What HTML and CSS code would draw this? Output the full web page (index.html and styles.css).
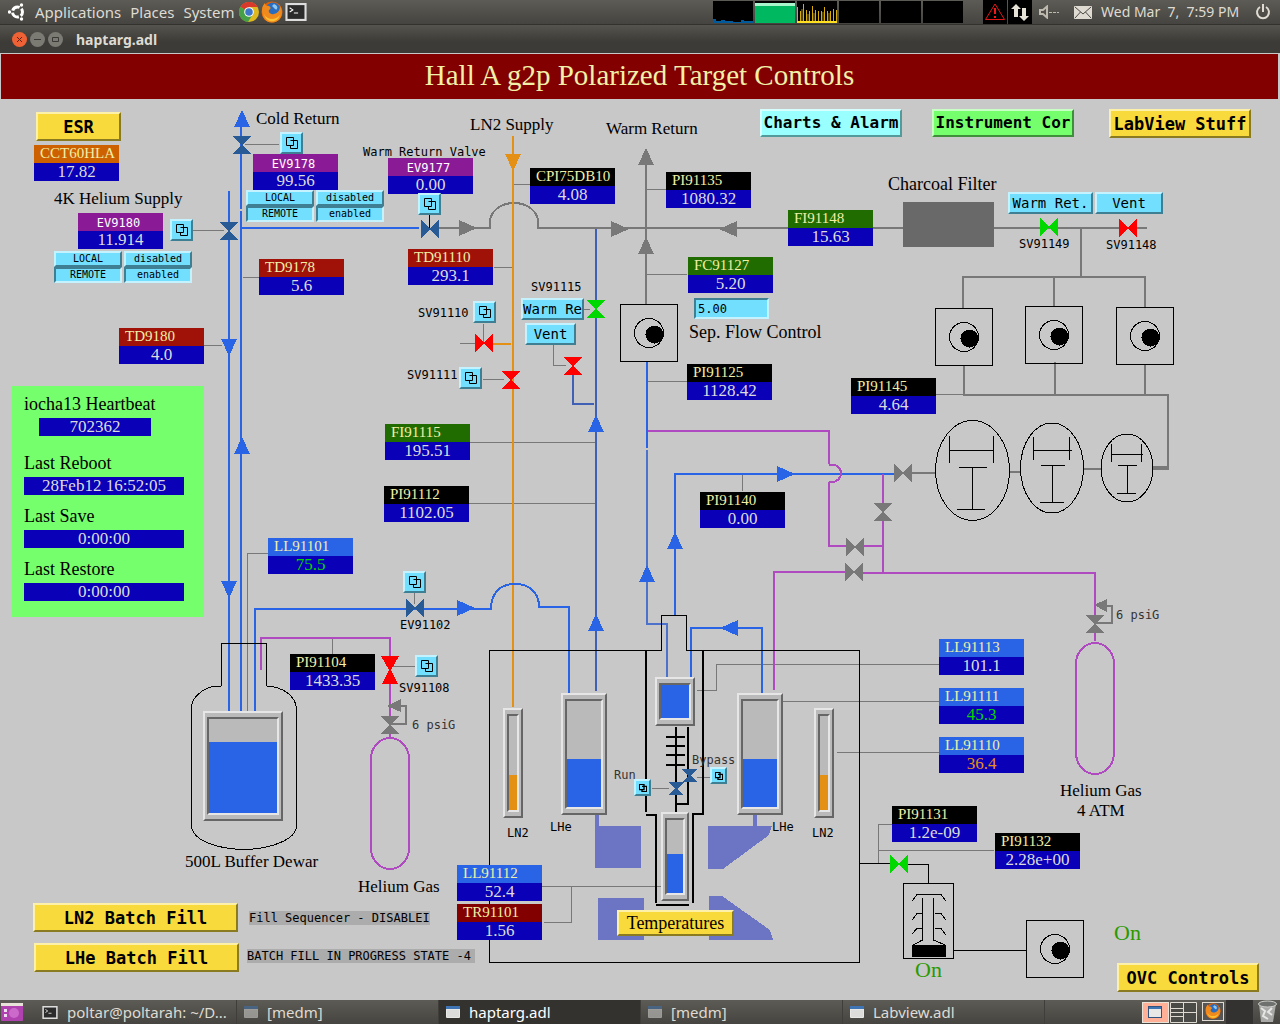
FILE: index.html
```html
<!doctype html>
<html lang="en">
<head>
    <meta charset="UTF-8">
    <meta name="viewport" content="width=device-width, initial-scale=1.0">
    <title>haptarg.adl</title>
    <link rel="stylesheet" href="styles.css">
</head>
<body>

<svg class="defs" aria-hidden="true">
    <symbol id="related" viewBox="0 0 12 12">
        <path d="M4.500 3.500H11.500V11.500H4.500V8.500M.5.500H7.500V8.500H.5Z" fill="none" stroke="#000"/>
    </symbol>
    <symbol id="win" viewBox="0 0 14 12">
        <rect width="14" height="12" rx="1" fill="#e8e8e6"/>
        <rect width="14" height="3" fill="#3f74b5"/>
        <rect x="1" y="4" width="12" height="7" fill="#dcdcda"/>
    </symbol>
    <symbol id="term" viewBox="0 0 20 17">
        <rect x="1" y="1" width="18" height="15" fill="#2b2b2b" stroke="#ddd" stroke-width="2"/>
        <path d="M4 4.500L7 6.500L4 8.500M8 9.500H12" fill="none" stroke="#fff"/>
    </symbol>
    <symbol id="firefox" viewBox="0 0 22 22">
        <circle cx="11" cy="11" r="10.500" fill="#e66000"/>
        <circle cx="12" cy="9" r="7.500" fill="#2a6cc0"/>
        <path d="M13 3C16 4 17 6 16 8C14 10 13 6 11 5Z" fill="#8ec7ee"/>
        <path d="M1 9C1 5 3 3 4 2C4 4 5 5 8 5C10 6 10 8 8 9C7 11 9 14 13 13C17 12 19 9 19 5C23 11 21 21 11 21.500C5 21.500 1 17 1 9Z" fill="#f08a1d"/>
        <path d="M3 13C6 19 14 20 19 14C17 20 12 21 9 20C6 19 4 17 3 13Z" fill="#fbc236"/>
    </symbol>
</svg>

<header class="panel">
    <nav class="menu">
        <svg class="logo" viewBox="0 0 18 18" width="18" height="18">
            <circle cx="9.500" cy="9" r="5" fill="none" stroke="#fff" stroke-width="3" stroke-dasharray="8.470 2" stroke-dashoffset="-6.200"/>
            <circle cx="1.500" cy="9" r="1.700" fill="#fff"/>
            <circle cx="13.500" cy="2" r="1.700" fill="#fff"/>
            <circle cx="13.500" cy="16" r="1.700" fill="#fff"/>
        </svg>
        <button>Applications</button>
        <button>Places</button>
        <button>System</button>
    </nav>
    <div class="launchers">
        <svg viewBox="0 0 20 20" width="20" height="20">
            <circle cx="10" cy="10" r="10" fill="#e0b91f"/>
            <path d="M10 10L1.300 5A10 10 0 0 1 18.700 5H10Z" fill="#d9392b"/>
            <path d="M10 10L1.300 5A10 10 0 0 0 9 20L14 12Z" fill="#45a047"/>
            <circle cx="10" cy="10" r="4.800" fill="#fff"/>
            <circle cx="10" cy="10" r="3.800" fill="#3d78c8"/>
        </svg>
        <svg width="22" height="22"><use href="#firefox"/></svg>
        <svg width="22" height="18"><use href="#term"/></svg>
    </div>
    <div class="graphs">
        <svg viewBox="0 0 40 22"><path d="M0 21V18H3V20H8V19H12V20H20V21H28V19H31V20H40V22H0Z" fill="#005a9c"/></svg>
        <svg viewBox="0 0 40 22"><rect y="3" width="40" height="19" fill="#00b860"/><rect y="2" width="40" height="3" fill="#a8f5cc"/></svg>
        <svg viewBox="0 0 40 22"><path d="M.5 22V6M3.500 22V10M6.500 22V3M9.500 22V9M12.500 22V10M15.500 22V5M18.500 22V9M21.500 22V10M24.500 22V10M27.500 22V6M30.500 22V10M33.500 22V10M36.500 22V8M39.500 22V9" stroke="#d8ac00"/><path d="M5 22V8M11 22V13M17 22V12M26 22V11M32 22V12" stroke="#9a7c00"/><rect y="20" width="40" height="2" fill="#ffe020"/></svg>
        <svg viewBox="0 0 40 22"></svg>
        <svg viewBox="0 0 40 22"></svg>
        <svg viewBox="0 0 40 22"></svg>
    </div>
    <div class="tray">
        <svg class="dark" viewBox="0 0 24 24" width="24" height="24">
            <path d="M12 4L21.500 19.500H2.500Z" fill="none" stroke="#e01818"/>
            <path d="M12 8V14M12 16V18" stroke="#f01818" stroke-width="2"/>
        </svg>
        <svg class="dark" viewBox="0 0 24 24" width="24" height="24">
            <path d="M8 4L13 9H10V17H6V9H3ZM16 21L11 16H14V8H18V16H21Z" fill="#e6e2d8"/>
        </svg>
        <svg class="speaker" viewBox="0 0 22 14" width="22" height="14">
            <path d="M1 5H4L8 1.500V12.500L4 9H1Z" fill="none" stroke="#bdb9ae" stroke-width="2"/>
            <path d="M10 7.500H20" stroke="#bdb9ae" stroke-dasharray="3 1"/>
        </svg>
        <svg viewBox="0 0 18 13" width="18" height="13">
            <rect width="18" height="13" rx="1" fill="#dfdbd2"/>
            <path d="M1 1L9 8L17 1M1 12L6.500 6M17 12L11.500 6" fill="none" stroke="#4a4944"/>
        </svg>
        <time>Wed Mar&nbsp; 7,&nbsp; 7:59 PM</time>
        <svg class="power" viewBox="0 0 16 16" width="16" height="16">
            <path d="M5 3A6 6 0 1 0 11 3M8 0V8" fill="none" stroke="#dfdbd2" stroke-width="2"/>
        </svg>
    </div>
</header>

<div class="titlebar">
    <button class="wm close" aria-label="Close"><svg viewBox="0 0 15 15"><path d="M5 5L10 10M10 5L5 10" stroke="#5c2312"/></svg></button>
    <button class="wm" aria-label="Minimize"><svg viewBox="0 0 15 15"><path d="M4 7.500H11" stroke="#3a3935"/></svg></button>
    <button class="wm" aria-label="Maximize"><svg viewBox="0 0 15 15"><path d="M4.500 5.500H10.500V9.500H4.500Z" fill="none" stroke="#3a3935"/></svg></button>
    <span class="title">haptarg.adl</span>
</div>

<main>
    <h1 class="banner">Hall A g2p Polarized Target Controls</h1>

    <div class="diagram">
        <svg class="piping" viewBox="0 99 1280 901" width="1280" height="901">
            <defs>
                <path id="vv" d="M-9-9H9L1 0L9 9H-9L-1 0Z"/>
                <path id="vh" d="M-9-9V9L0 1L9 9V-9L0-1Z"/>
                <path id="up" d="M0-9L8 8H-8Z"/>
                <path id="down" d="M0 9L8-8H-8Z"/>
                <path id="right" d="M9 0L-9-8V8Z"/>
                <path id="left" d="M-9 0L9-8V8Z"/>
                <g id="pump">
                    <rect x="-28.500" y="-28.500" width="57" height="57" fill="none" stroke="#000"/>
                    <circle r="14.500" fill="none" stroke="#000"/>
                    <circle cx="5.500" cy="1.500" r="9" fill="#000"/>
                </g>
            </defs>

            <!-- magnet coils -->
            <g class="magnet">
                <path d="M595 815H599V826H641V868H595Z"/>
                <path d="M598 898H644V940H598Z"/>
                <path d="M753 815H757V826H772L769 835L723 869H708V826H753Z"/>
                <path d="M709 896H722L770 930L773 940H709Z"/>
            </g>

            <!-- sense lines -->
            <g class="sense">
                <path d="M245 144.500H279M193 230.500H224M243 277.500H259M204 345.500H222M268 553.500H247.500V711"/>
                <path d="M514 184.500H530M494 267.500H512M647 189.500H666M647 274.500H687M648 381.500H688"/>
                <path d="M583 309.500H590M553.500 345V365.500H566M483.500 324V343M460 343.500H476M483 379.500H504"/>
                <path d="M470 442.500H597M468 503.500H597M414.500 593V604M332.500 639V655M393 666.500H415"/>
                <path d="M742.500 474V491M936 394.500H964M697 690.500H716.500V664.500H939M783 701.500H939M837 752.500H939"/>
                <path d="M697 777.500H710M652 788.500H669M542 886.500H661M571.500 886V922.500H544"/>
                <path d="M892 824.500H878.500V863M878 850.500H994"/>
            </g>

            <!-- warm return -->
            <g class="pipe gray">
                <path d="M438 228H490V222A24 19 0 0 1 538 222V228H788M873 228H903M994 228H1147"/>
                <path d="M646 160V304M1081 228V276M963 308V277H1145V307M1054 277V306"/>
                <path d="M964 365V395H1168V466M1055 362V395M1145 364V395"/>
                <path d="M911 473H935M1010 472H1020M1083 469H1101"/>
                <path d="M401 706H406V724H390M1107 606H1112V623H1095"/>
                <path d="M1153 468H1169" class="fat"/>
            </g>
            <rect x="903" y="202" width="91" height="45" class="filter"/>

            <!-- LN2 -->
            <path class="pipe orange" d="M513 136V707M492 344H511"/>

            <!-- cold lines -->
            <g class="pipe blue">
                <path d="M229 191V711M241 115V209M241 211V711M241 228H419"/>
                <path d="M255 711V609H491C491 592 501 584 515 584C529 584 539 592 539 607H569V694"/>
                <path d="M647 361V448M675 615V474H894M691 678V628H762V694"/>
            </g>
            <path class="pipe navy" d="M596 229V691M573 374V404H594"/>
            <path class="pipe steel" d="M647 450V624H667V678"/>

            <!-- helium gas -->
            <g class="pipe purple">
                <path d="M261 670V638H390V738M648 431H829V464M829 482V546H847"/>
                <path d="M829 465C845 462 845 484 829 482M883 474V573M864 546H883"/>
                <path d="M774 690V572H846M862 573H1095V641"/>
                <rect x="371" y="738" width="38" height="131" rx="19" ry="21"/>
                <rect x="1076" y="643" width="38" height="131" rx="19" ry="21"/>
            </g>

            <!-- vessels -->
            <g class="wall">
                <path d="M221.500 686V643.500H266.500V686C284 687 295 696 296.500 708V826C296 840 270 849 244 849.500C220 849 193 842 191.500 826V708C191 698 203 688 215 686H221" class="dewar"/>
                <path d="M489.500 962.500V650.500H661.500V615.500H686.500V650.500H859.500V962.500Z"/>
                <path d="M859 863.500H892M907 864.500H928.500V883M953 950.500H1026"/>
                <ellipse cx="972.500" cy="470.500" rx="37" ry="50"/>
                <path d="M949.500 436V463M993.500 436V463M949 450.500H994M959 467.500H987M972.500 467V509M957 509.500H985"/>
                <ellipse cx="1052" cy="468" rx="31.500" ry="45"/>
                <path d="M1033.500 437V460M1069.500 437V460M1033 450.500H1072M1041 465.500H1065M1052.500 465V502M1040 502.500H1064"/>
                <ellipse cx="1127" cy="468" rx="26" ry="34"/>
                <path d="M1111.500 444V462M1141.500 444V462M1111 454.500H1143M1118 465.500H1137M1127.500 465V493M1117 493.500H1136"/>
                <rect x="903.500" y="883.500" width="50" height="75"/>
                <path d="M912 901L917 894.500H941L946 901M912 920L917 913.500H922M912 934L917 928.500H922M935 913.500H941L946 920M935 928.500H941L946 935"/>
                <path d="M922.500 898V940L913 945M933.500 898V940L945 945"/>
                <rect x="912.500" y="945.500" width="33" height="11" fill="#000"/>
            </g>
            <g class="pipe black">
                <path d="M646 650V812M646 815H656V903M656 905H689M693 903V814H703V650"/>
                <path d="M676 727V812M688 727V804H676M666 737H685M666 746H685M666 755H685M666 765H685"/>
            </g>

            <!-- pumps -->
            <use href="#pump" x="649" y="333"/>
            <use href="#pump" x="964" y="337"/>
            <use href="#pump" x="1054" y="335"/>
            <use href="#pump" x="1145" y="336"/>
            <use href="#pump" x="1055" y="949"/>

            <!-- flow arrows -->
            <g class="f-blue">
                <use href="#up" x="242" y="119"/>
                <use href="#up" x="242" y="446"/>
                <use href="#down" x="229" y="347"/>
                <use href="#down" x="229" y="589"/>
                <use href="#right" x="466" y="608"/>
                <use href="#up" x="596" y="424"/>
                <use href="#up" x="596" y="623"/>
                <use href="#up" x="647" y="574"/>
                <use href="#up" x="675" y="541"/>
                <use href="#right" x="786" y="474"/>
                <use href="#left" x="729" y="628"/>
            </g>
            <g class="f-gray">
                <use href="#right" x="468" y="228"/>
                <use href="#right" x="620" y="229"/>
                <use href="#left" x="728" y="229"/>
                <use href="#up" x="646" y="157"/>
                <use href="#up" x="646" y="246"/>
                <path d="M387 706L401 699V712ZM1094 605L1107 599V612Z"/>
                <use href="#vh" x="903" y="473"/>
                <use href="#vv" x="883" y="512"/>
                <use href="#vh" x="855" y="547"/>
                <use href="#vh" x="854" y="572"/>
                <use href="#vv" x="390" y="725"/>
                <use href="#vv" x="1095" y="624"/>
            </g>
            <use href="#down" x="513" y="162" class="f-orange"/>

            <!-- valves -->
            <path class="stem" d="M429.500 215V228"/>
            <g class="f-valve">
                <use href="#vv" x="242" y="145"/>
                <use href="#vv" x="229" y="231"/>
                <use href="#vh" x="430" y="229"/>
                <use href="#vh" x="415" y="608"/>
                <path d="M682 769H697L691 776L697 782H682L688 776ZM668 782H684L677 789L684 795H668L675 789Z"/>
            </g>
            <g class="f-red">
                <use href="#vh" x="1128" y="228"/>
                <use href="#vh" x="484" y="343"/>
                <use href="#vv" x="511" y="380"/>
                <use href="#vv" x="573" y="366"/>
                <path d="M381 656H399L391 670L398 684H382L389 670Z"/>
            </g>
            <g class="f-green">
                <use href="#vh" x="1049" y="227"/>
                <use href="#vv" x="596" y="309"/>
                <use href="#vh" x="899" y="864"/>
            </g>
        </svg>

        <!-- level gauges -->
        <div class="tank at-dewar"><div class="well"><div class="level" style="height: 76%"></div></div></div>
        <div class="tank slim at-ln2-l"><div class="well"><div class="level ln2" style="height: 37%"></div></div></div>
        <div class="tank at-lhe-l"><div class="well"><div class="level" style="height: 45%"></div></div></div>
        <div class="tank at-pot"><div class="well"><div class="level" style="height: 100%"></div></div></div>
        <div class="tank at-nose"><div class="well"><div class="level" style="height: 53%"></div></div></div>
        <div class="tank at-lhe-r"><div class="well"><div class="level" style="height: 45%"></div></div></div>
        <div class="tank slim at-ln2-r"><div class="well"><div class="level ln2" style="height: 37%"></div></div></div>

        <!-- readbacks -->
        <div class="tag amber at-cct60hla"><span>CCT60HLA</span><output>17.82</output></div>
        <div class="tag valve at-ev9178"><span>EV9178</span><output>99.56</output></div>
        <div class="tag valve at-ev9180"><span>EV9180</span><output>11.914</output></div>
        <div class="tag valve at-ev9177"><span>EV9177</span><output>0.00</output></div>
        <div class="tag temp at-td9178"><span>TD9178</span><output>5.6</output></div>
        <div class="tag temp at-td9180"><span>TD9180</span><output>4.0</output></div>
        <div class="tag temp at-td91110"><span>TD91110</span><output>293.1</output></div>
        <div class="tag at-cpi75db10"><span>CPI75DB10</span><output>4.08</output></div>
        <div class="tag at-pi91135"><span>PI91135</span><output>1080.32</output></div>
        <div class="tag flow at-fi91148"><span>FI91148</span><output>15.63</output></div>
        <div class="tag flow at-fc91127"><span>FC91127</span><output>5.20</output></div>
        <div class="tag at-pi91125"><span>PI91125</span><output>1128.42</output></div>
        <div class="tag at-pi91145"><span>PI91145</span><output>4.64</output></div>
        <div class="tag flow at-fi91115"><span>FI91115</span><output>195.51</output></div>
        <div class="tag at-pi91112"><span>PI91112</span><output>1102.05</output></div>
        <div class="tag at-pi91140"><span>PI91140</span><output>0.00</output></div>
        <div class="tag lev at-ll91101"><span>LL91101</span><output class="ok">75.5</output></div>
        <div class="tag at-pi91104"><span>PI91104</span><output>1433.35</output></div>
        <div class="tag lev at-ll91113"><span>LL91113</span><output>101.1</output></div>
        <div class="tag lev at-ll91111"><span>LL91111</span><output class="ok">45.3</output></div>
        <div class="tag lev at-ll91110"><span>LL91110</span><output class="warn">36.4</output></div>
        <div class="tag at-pi91131"><span>PI91131</span><output>1.2e-09</output></div>
        <div class="tag at-pi91132"><span>PI91132</span><output>2.28e+00</output></div>
        <div class="tag lev at-ll91112"><span>LL91112</span><output>52.4</output></div>
        <div class="tag res at-tr91101"><span>TR91101</span><output>1.56</output></div>

        <!-- IOC status -->
        <section class="ioc">
            <h2>iocha13 Heartbeat</h2>
            <output class="beat">702362</output>
            <h2>Last Reboot</h2>
            <output>28Feb12 16:52:05</output>
            <h2>Last Save</h2>
            <output>0:00:00</output>
            <h2>Last Restore</h2>
            <output>0:00:00</output>
        </section>

        <!-- line and equipment names -->
        <span class="label at-cold-return">Cold Return</span>
        <span class="label at-supply">4K Helium Supply</span>
        <span class="label at-ln2-supply">LN2 Supply</span>
        <span class="label at-warm-return">Warm Return</span>
        <span class="label wide at-charcoal">Charcoal Filter</span>
        <label class="label wide at-sep-label" for="sepFlow">Sep. Flow Control</label>
        <span class="label at-dewar-name">500L Buffer Dewar</span>
        <span class="label at-gas-l">Helium Gas</span>
        <span class="label at-gas-r">Helium Gas<br>4 ATM</span>
        <span class="small at-wrv">Warm Return Valve</span>
        <span class="small at-sv91115">SV91115</span>
        <span class="small at-sv91110">SV91110</span>
        <span class="small at-sv91111">SV91111</span>
        <span class="small at-sv91149">SV91149</span>
        <span class="small at-sv91148">SV91148</span>
        <span class="small at-ev91102">EV91102</span>
        <span class="small at-sv91108">SV91108</span>
        <span class="small dim at-psi-l">6 psiG</span>
        <span class="small dim at-psi-r">6 psiG</span>
        <span class="small dim at-run">Run</span>
        <span class="small dim at-bypass">Bypass</span>
        <span class="small at-ln2-l-name">LN2</span>
        <span class="small at-lhe-l-name">LHe</span>
        <span class="small at-lhe-r-name">LHe</span>
        <span class="small at-ln2-r-name">LN2</span>
        <span class="state at-turbo-on">On</span>
        <span class="state at-pump-on">On</span>
        <span class="small message at-seq">Fill Sequencer - DISABLEI</span>
        <span class="small message at-batch">BATCH FILL IN PROGRESS STATE -4</span>

        <!-- controls -->
        <button class="btn yellow at-esr">ESR</button>
        <button class="btn aqua snug at-charts">Charts &amp; Alarm</button>
        <button class="btn green snug at-instr">Instrument Cor</button>
        <button class="btn yellow at-labview">LabView Stuff</button>
        <button class="btn yellow at-ln2-fill">LN2 Batch Fill</button>
        <button class="btn yellow at-lhe-fill">LHe Batch Fill</button>
        <button class="btn yellow at-ovc">OVC Controls</button>
        <button class="btn yellow serif at-temps">Temperatures</button>
        <button class="btn cyan at-warm-115">Warm Re</button>
        <button class="btn cyan at-vent-115">Vent</button>
        <button class="btn cyan at-warm-149">Warm Ret.</button>
        <button class="btn cyan at-vent-148">Vent</button>
        <input class="setpoint at-sep" id="sepFlow" type="text" value="5.00">

        <div class="choice at-choice-9178">
            <button>LOCAL</button><button>disabled</button>
            <button class="on">REMOTE</button><button class="on">enabled</button>
        </div>
        <div class="choice at-choice-9180">
            <button>LOCAL</button><button>disabled</button>
            <button class="on">REMOTE</button><button class="on">enabled</button>
        </div>

        <button class="rel at-rel-9178" aria-label="EV9178"><svg><use href="#related"/></svg></button>
        <button class="rel at-rel-9180" aria-label="EV9180"><svg><use href="#related"/></svg></button>
        <button class="rel at-rel-9177" aria-label="EV9177"><svg><use href="#related"/></svg></button>
        <button class="rel at-rel-91110" aria-label="SV91110"><svg><use href="#related"/></svg></button>
        <button class="rel at-rel-91111" aria-label="SV91111"><svg><use href="#related"/></svg></button>
        <button class="rel at-rel-91102" aria-label="EV91102"><svg><use href="#related"/></svg></button>
        <button class="rel at-rel-91108" aria-label="SV91108"><svg><use href="#related"/></svg></button>
        <button class="rel mini at-rel-run" aria-label="Run"><svg><use href="#related"/></svg></button>
        <button class="rel mini at-rel-bypass" aria-label="Bypass"><svg><use href="#related"/></svg></button>
    </div>
</main>

<footer class="taskbar">
    <button class="desk" aria-label="Show desktop">
        <svg viewBox="0 0 22 18" width="22" height="18">
            <rect width="22" height="18" rx="1" fill="#b042b0"/>
            <rect width="22" height="3" fill="#e8e2d8"/>
            <path d="M3 6H6V9H3ZM3 11H6V14H3Z" fill="#f0dff0"/>
            <circle cx="13" cy="10" r="5" fill="#cc6acb"/>
        </svg>
    </button>
    <nav class="tasks">
        <button><svg width="16" height="13"><use href="#term"/></svg>poltar@poltarah: ~/D...</button>
        <button class="min"><svg width="14" height="12"><use href="#win"/></svg>[medm]</button>
        <button class="current"><svg width="14" height="12"><use href="#win"/></svg>haptarg.adl</button>
        <button class="min"><svg width="14" height="12"><use href="#win"/></svg>[medm]</button>
        <button><svg width="14" height="12"><use href="#win"/></svg>Labview.adl</button>
    </nav>
    <svg class="pager" viewBox="0 0 138 24" width="138" height="24">
        <rect x=".5" y="2.500" width="26" height="20" fill="#ffb096" stroke="#e8e2d8"/>
        <rect x="6.500" y="6.500" width="13" height="11" fill="#e8e8e6" stroke="#30537f"/>
        <rect x="7" y="7" width="12" height="2" fill="#3f74b5"/>
        <path d="M28.500 2.500H54.500V22.500H28.500ZM41.500 2V23M28 12.500H55M28 8.500H41M28 16.500H41" fill="#4a4a47" stroke="#dfdbd2"/>
        <rect x="60.500" y="2.500" width="21" height="18" fill="#555" stroke="#dfdbd2"/>
        <svg x="63" y="3" width="16" height="16"><use href="#firefox"/></svg>
        <rect x="84" width="27" height="24" fill="#333230"/>
        <path d="M117 4L119 22H131L134 4Z" fill="#a9aaa8"/>
        <path d="M119 8L123 11L121 16L126 19M130 8L126 12L130 15" fill="none" stroke="#e6e6e4" stroke-width="2"/>
        <ellipse cx="125.500" cy="4" rx="9" ry="3" fill="#6f716f" stroke="#cfd0ce"/>
    </svg>
</footer>

</body>
</html>
```
FILE: styles.css
```css
* {
    box-sizing: border-box;
}

body {
    display: flex;
    flex-direction: column;
    min-height: 100vh;
    margin: 0;
    background: #c8c8c8;
    font-family: "Noto Sans", sans-serif;
}

button {
    margin: 0;
    padding: 0;
    border: none;
    background: none;
    color: inherit;
    font: inherit;
    white-space: nowrap;
    cursor: pointer;
}

svg {
    display: block;
    flex: none;
}

.defs {
    position: absolute;
    width: 0;
    height: 0;
}

/* desktop panel */

.panel {
    display: flex;
    align-items: center;
    height: 24px;
    background: linear-gradient(#5c5b55, #454440);
    color: #dfdbd2;
    font-size: 14px;
    line-height: 24px;
}

.menu {
    display: flex;
    align-items: center;
    gap: 9px;
    padding-left: 8px;
    font-size: 15px;
}

.launchers {
    display: flex;
    align-items: center;
    gap: 2px;
    margin-left: 5px;
}

.graphs {
    display: flex;
    gap: 2px;
    margin-left: auto;
    margin-right: 20px;
}

.graphs svg {
    width: 40px;
    height: 22px;
    background: #000;
}

.tray {
    display: flex;
    align-items: center;
    padding-right: 9px;
}

.dark {
    background: #000;
    margin-right: 1px;
}

.speaker {
    margin: 0 13px 0 6px;
}

.tray time {
    width: 138px;
    margin: 0 16px 0 9px;
    white-space: nowrap;
}

.titlebar {
    display: flex;
    align-items: center;
    gap: 3px;
    height: 29px;
    padding-left: 12px;
    background: linear-gradient(#55544e, #3c3b37 60%);
    border-top: 1px solid #33322f;
    color: #dfdbd2;
}

.wm {
    width: 15px;
    height: 15px;
    border-radius: 8px;
    background: #7b7a73;
}

.wm.close {
    background: #ee6236;
}

.title {
    margin-left: 10px;
    font-size: 14px;
    font-weight: bold;
}

/* screen */

.banner {
    height: 45px;
    margin: 1px 2px 0 1px;
    background: #820000;
    color: #f0f0a8;
    font: 29px/43px "Liberation Serif", serif;
    text-align: center;
}

.diagram {
    position: relative;
    min-width: 1280px;
}

.piping {
    shape-rendering: crispEdges;
}

.sense,
.pipe,
.wall {
    fill: none;
}

.sense {
    stroke: #787878;
}

.stem,
.wall {
    stroke: #000;
}

.pipe {
    stroke-width: 2;
}

.gray { stroke: #787878; }
.blue { stroke: #2a64e6; }
.navy { stroke: #3f60b4; }
.steel { stroke: #4c72cc; }
.orange { stroke: #e49015; }
.purple { stroke: #b04ac0; }
.black { stroke: #000; }
.fat { stroke-width: 4; }

.magnet { fill: #6c74c4; }
.filter { fill: #696969; }
.f-blue { fill: #2a64e6; }
.f-gray { fill: #787878; }
.f-orange { fill: #e49015; }
.f-valve { fill: #285a96; }
.f-red { fill: #ff0000; }
.f-green { fill: #00d800; }

/* gauges */

.tank {
    position: absolute;
    display: flex;
    padding: 4px 2px;
    border: 2px solid;
    border-color: #e6e6e6 #666 #666 #e6e6e6;
    background: #bababa;
}

.well {
    display: flex;
    flex: 1;
    align-items: flex-end;
    border: 2px solid;
    border-color: #666 #e6e6e6 #e6e6e6 #666;
}

.level {
    flex: 1;
    background: #2a64e6;
}

.level.ln2 {
    background: #e49015;
}

/* readbacks */

.tag {
    position: absolute;
    width: 85px;
    background: #000;
    color: #f0f0a8;
    font-family: "Liberation Serif", serif;
}

.tag span,
.tag output {
    display: block;
    height: 18px;
    line-height: 17px;
}

.tag span {
    padding-left: 6px;
    font-size: 15px;
}

.tag output,
.ioc output {
    background: #0a00b8;
    color: #dcdcdc;
    font-size: 17px;
    text-align: center;
}

.tag.amber { background: #cd6100; }
.tag.valve { background: #8b1a96; }
.tag.temp { background: #a01208; }
.tag.flow { background: #216c00; }
.tag.lev { background: #2a64e6; }
.tag.res { background: #820000; }
.tag output.ok { color: #00d800; }
.tag output.warn { color: #e49015; }

.tag.valve span {
    padding: 2px 4px 0 0;
    color: #fff;
    font-family: "DejaVu Sans Mono", monospace;
    font-size: 12px;
    text-align: center;
}

.ioc {
    position: absolute;
    left: 12px;
    top: 287px;
    width: 192px;
    padding: 8px 20px 5px 12px;
    background: #76ff6c;
    font-family: "Liberation Serif", serif;
}

.ioc h2 {
    margin: 0;
    font-size: 18px;
    font-weight: normal;
    line-height: 20px;
}

.ioc output {
    display: block;
    height: 18px;
    margin: 4px 0 11px;
    line-height: 18px;
}

.ioc output.beat {
    width: 112px;
    margin: 4px 0 17px 15px;
}

/* text */

.label,
.small,
.state {
    position: absolute;
    white-space: nowrap;
}

.label {
    font: 17px/20px "Liberation Serif", serif;
    text-align: center;
}

.label.wide {
    font-size: 18px;
}

.small {
    font: 12px/14px "DejaVu Sans Mono", monospace;
}

.dim {
    color: #333;
}

.state {
    color: #2a9a00;
    font: 22px/24px "Liberation Serif", serif;
}

.message {
    background: #acacac;
}

/* controls */

.btn {
    position: absolute;
    display: flex;
    align-items: center;
    justify-content: center;
    height: 29px;
    border: 2px solid;
    color: #000;
    font: bold 17px/20px "DejaVu Sans Mono", monospace;
}

.btn.yellow {
    border-color: #fdf0a8 #8a7a20 #8a7a20 #fdf0a8;
    background: #f9da3c;
}

.btn.aqua {
    border-color: #d8ffff #559a9a #559a9a #d8ffff;
    background: #99ffff;
}

.btn.green {
    border-color: #c8ffc4 #3f8f3a #3f8f3a #c8ffc4;
    background: #76ff6c;
}

.btn.snug {
    height: 28px;
    font-size: 16px;
}

.btn.serif {
    font: 18px/20px "Liberation Serif", serif;
}

.btn.cyan,
.rel,
.choice button {
    border: 2px solid;
    border-color: #c4f3ff #3f7f94 #3f7f94 #c4f3ff;
    background: #73dfff;
    color: #000;
}

.btn.cyan {
    height: 22px;
    font-size: 14px;
    font-weight: normal;
}

.rel {
    position: absolute;
    display: flex;
    align-items: center;
    justify-content: center;
    width: 23px;
    height: 22px;
}

.rel svg {
    width: 12px;
    height: 12px;
}

.rel.mini {
    width: 17px;
    height: 17px;
}

.rel.mini svg {
    width: 8px;
    height: 8px;
    stroke-width: 2;
}

.choice {
    position: absolute;
    display: grid;
    grid-template-columns: 1fr 1fr;
    column-gap: 2px;
    width: 138px;
    font: 10px/12px "DejaVu Sans Mono", monospace;
}

.choice button {
    height: 16px;
}

.choice button.on {
    border-color: #3f7f94 #c4f3ff #c4f3ff #3f7f94;
}

.setpoint {
    position: absolute;
    width: 75px;
    height: 21px;
    padding: 0 2px;
    border: 2px solid;
    border-color: #3f7f94 #c4f3ff #c4f3ff #3f7f94;
    border-radius: 0;
    background: #73dfff;
    font: 12px/14px "DejaVu Sans Mono", monospace;
}

/* places on the diagram */

.at-dewar { left: 203px; top: 612px; width: 80px; height: 110px; }
.at-ln2-l { left: 503px; top: 609px; width: 20px; height: 110px; }
.at-lhe-l { left: 561px; top: 594px; width: 46px; height: 122px; }
.at-pot { left: 655px; top: 578px; width: 40px; height: 49px; }
.at-nose { left: 661px; top: 713px; width: 28px; height: 89px; }
.at-lhe-r { left: 737px; top: 594px; width: 46px; height: 122px; }
.at-ln2-r { left: 814px; top: 609px; width: 20px; height: 110px; }

.at-cct60hla { left: 34px; top: 46px; }
.at-ev9178 { left: 253px; top: 55px; }
.at-ev9180 { left: 78px; top: 114px; }
.at-ev9177 { left: 388px; top: 59px; }
.at-td9178 { left: 259px; top: 160px; }
.at-td9180 { left: 119px; top: 229px; }
.at-td91110 { left: 408px; top: 150px; }
.at-cpi75db10 { left: 530px; top: 69px; }
.at-pi91135 { left: 666px; top: 73px; }
.at-fi91148 { left: 788px; top: 111px; }
.at-fc91127 { left: 688px; top: 158px; }
.at-pi91125 { left: 687px; top: 265px; }
.at-pi91145 { left: 851px; top: 279px; }
.at-fi91115 { left: 385px; top: 325px; }
.at-pi91112 { left: 384px; top: 387px; }
.at-pi91140 { left: 700px; top: 393px; }
.at-ll91101 { left: 268px; top: 439px; }
.at-pi91104 { left: 290px; top: 555px; }
.at-ll91113 { left: 939px; top: 540px; }
.at-ll91111 { left: 939px; top: 589px; }
.at-ll91110 { left: 939px; top: 638px; }
.at-pi91131 { left: 892px; top: 707px; }
.at-pi91132 { left: 995px; top: 734px; }
.at-ll91112 { left: 457px; top: 766px; }
.at-tr91101 { left: 457px; top: 805px; }

.at-cold-return { left: 256px; top: 10px; }
.at-supply { left: 54px; top: 90px; }
.at-ln2-supply { left: 470px; top: 16px; }
.at-warm-return { left: 606px; top: 20px; }
.at-charcoal { left: 888px; top: 75px; }
.at-sep-label { left: 689px; top: 223px; }
.at-dewar-name { left: 185px; top: 753px; }
.at-gas-l { left: 358px; top: 778px; }
.at-gas-r { left: 1060px; top: 682px; }
.at-wrv { left: 363px; top: 46px; }
.at-sv91115 { left: 531px; top: 181px; }
.at-sv91110 { left: 418px; top: 207px; }
.at-sv91111 { left: 407px; top: 269px; }
.at-sv91149 { left: 1019px; top: 138px; }
.at-sv91148 { left: 1106px; top: 139px; }
.at-ev91102 { left: 400px; top: 519px; }
.at-sv91108 { left: 399px; top: 582px; }
.at-psi-l { left: 412px; top: 619px; }
.at-psi-r { left: 1116px; top: 509px; }
.at-run { left: 614px; top: 669px; }
.at-bypass { left: 692px; top: 654px; }
.at-ln2-l-name { left: 507px; top: 727px; }
.at-lhe-l-name { left: 550px; top: 721px; }
.at-lhe-r-name { left: 772px; top: 721px; }
.at-ln2-r-name { left: 812px; top: 727px; }
.at-turbo-on { left: 915px; top: 859px; }
.at-pump-on { left: 1114px; top: 822px; }
.at-seq { left: 249px; top: 812px; }
.at-batch { left: 247px; top: 850px; padding-right: 4px; }

.at-esr { left: 36px; top: 13px; width: 85px; }
.at-charts { left: 760px; top: 10px; width: 142px; }
.at-instr { left: 932px; top: 10px; width: 142px; }
.at-labview { left: 1109px; top: 10px; width: 142px; }
.at-ln2-fill { left: 33px; top: 804px; width: 205px; }
.at-lhe-fill { left: 34px; top: 844px; width: 205px; }
.at-ovc { left: 1117px; top: 864px; width: 142px; }
.at-temps { left: 617px; top: 811px; width: 117px; height: 26px; }
.at-warm-115 { left: 521px; top: 199px; width: 63px; }
.at-vent-115 { left: 525px; top: 224px; width: 51px; }
.at-warm-149 { left: 1008px; top: 93px; width: 85px; }
.at-vent-148 { left: 1095px; top: 93px; width: 68px; }
.at-sep { left: 694px; top: 199px; }
.at-choice-9178 { left: 246px; top: 91px; }
.at-choice-9180 { left: 54px; top: 152px; }

.at-rel-9178 { left: 280px; top: 33px; }
.at-rel-9180 { left: 170px; top: 120px; }
.at-rel-9177 { left: 418px; top: 94px; }
.at-rel-91110 { left: 473px; top: 202px; }
.at-rel-91111 { left: 459px; top: 268px; }
.at-rel-91102 { left: 403px; top: 472px; }
.at-rel-91108 { left: 415px; top: 556px; }
.at-rel-run { left: 634px; top: 680px; }
.at-rel-bypass { left: 710px; top: 668px; }

/* window list */

.taskbar {
    display: flex;
    align-items: center;
    height: 24px;
    background: linear-gradient(#5c5b55, #454440);
    color: #dfdbd2;
    font-size: 15px;
}

.desk {
    padding-left: 1px;
    margin-right: 12px;
}

.tasks {
    display: grid;
    flex: 0 1 1010px;
    grid-template-columns: repeat(5, 1fr);
    height: 24px;
}

.tasks button {
    display: flex;
    align-items: center;
    gap: 9px;
    padding-left: 7px;
    border-right: 1px solid #3f3e3a;
    line-height: 24px;
}

.tasks .current {
    background: #33322f;
    color: #fff;
}

.tasks .min svg {
    opacity: .5;
}

.pager {
    margin-left: auto;
}
```
